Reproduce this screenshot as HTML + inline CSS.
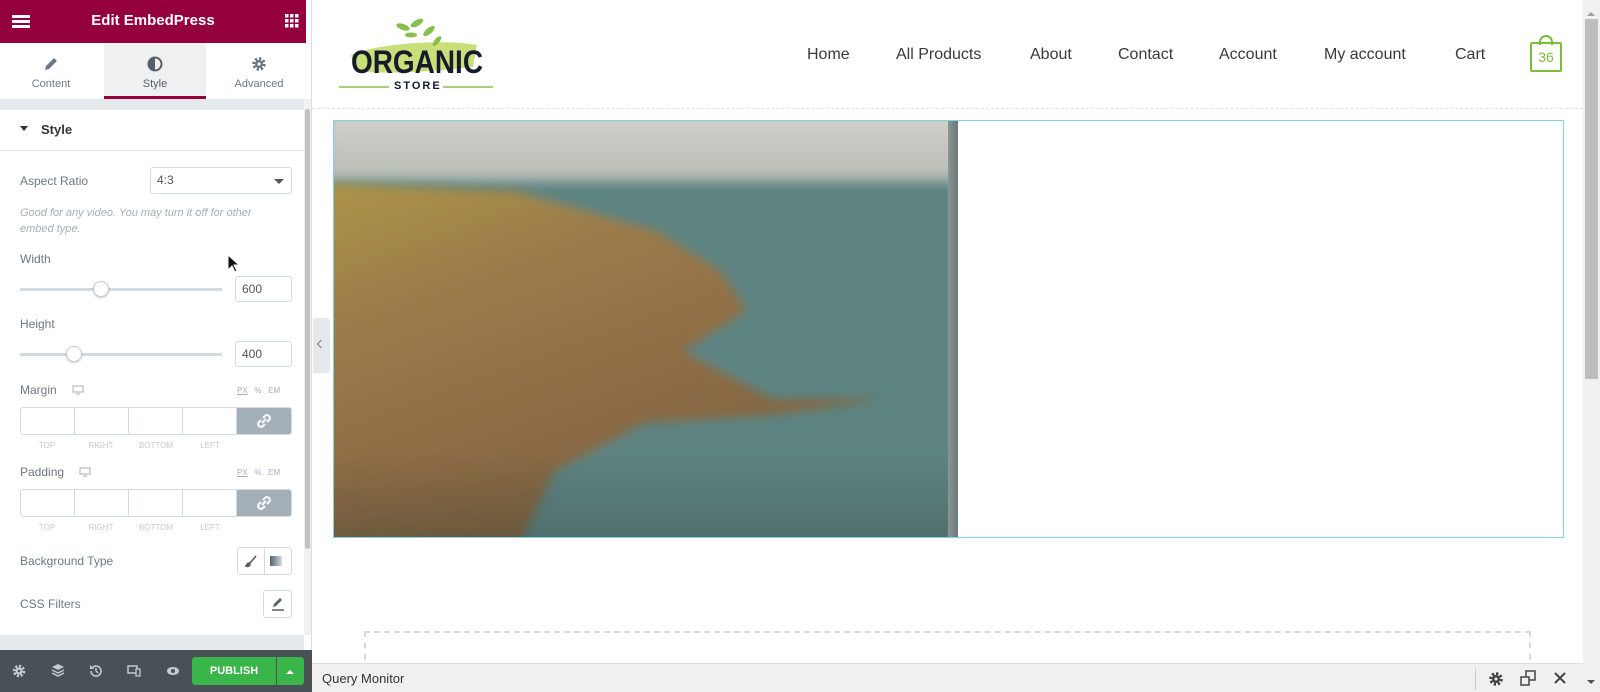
<!DOCTYPE html>
<html><head><meta charset="utf-8"><style>
*{box-sizing:border-box;margin:0;padding:0}
body{width:1600px;height:692px;overflow:hidden;font-family:"Liberation Sans",sans-serif;background:#fff;position:relative}
.abs{position:absolute}
#side{left:0;top:0;width:312px;height:692px;background:#fff;border-right:1px solid #ddd}
#hdr{left:0;top:0;width:306px;height:43px;background:#93003c;color:#fff;font-size:15px;font-weight:bold;text-align:center;line-height:42px}
.tab{top:43px;height:56px;width:102px;text-align:center;font-size:11px;color:#6d7882}
.lbl{font-size:12px;color:#6d7882;left:20px}
.inp{border:1px solid #d5dadf;border-radius:3px;background:#fff;font-size:12px;color:#555;padding-left:6px}
.track{height:3px;background:#d5dadf;left:20px;width:202px}
.knob{width:16px;height:16px;border-radius:50%;background:#fff;border:1px solid #c5cbd1;box-shadow:0 1px 2px rgba(0,0,0,.2)}
.dims{left:20px;width:272px;height:28px;border:1px solid #d5dadf;border-radius:3px;display:flex;overflow:hidden}
.dims div{flex:1;border-right:1px solid #d5dadf}
.dims .lk{background:#a4afb7;border:none;flex:1.02}
.sub{font-size:8px;color:#c2cbd2;width:54px;text-align:center}
.units{font-size:8px;color:#a4afb7;left:237px}
.nav{top:46px;font-size:16px;color:#3a3a3a;font-family:"Liberation Sans",sans-serif}
</style></head><body>

<div id="side" class="abs">
 <div id="hdr" class="abs">Edit EmbedPress
  <div class="abs" style="left:12px;top:15px;width:18px;height:13px;border-top:3px solid #fff;border-bottom:3px solid #fff"><div style="margin-top:2px;height:3px;background:#fff"></div></div>
  <svg class="abs" style="left:285px;top:14px" width="14" height="14"><g fill="#fff"><rect x="0" y="0" width="3.5" height="3.5"/><rect x="5" y="0" width="3.5" height="3.5"/><rect x="10" y="0" width="3.5" height="3.5"/><rect x="0" y="5" width="3.5" height="3.5"/><rect x="5" y="5" width="3.5" height="3.5"/><rect x="10" y="5" width="3.5" height="3.5"/><rect x="0" y="10" width="3.5" height="3.5"/><rect x="5" y="10" width="3.5" height="3.5"/><rect x="10" y="10" width="3.5" height="3.5"/></g></svg>
 </div>
 <div class="abs tab" style="left:0"><svg style="margin-top:13px" width="16" height="16"><path d="M2 14l1-4 8-8 3 3-8 8z" fill="#6d7882"/></svg><div style="margin-top:3px">Content</div></div>
 <div class="abs tab" style="left:104px;background:#eef0f2;border-bottom:3px solid #93003c;color:#556068"><svg style="margin-top:13px" width="16" height="16"><circle cx="8" cy="8" r="6.5" fill="none" stroke="#556068" stroke-width="2"/><path d="M8 1.5a6.5 6.5 0 0 0 0 13z" fill="#556068"/></svg><div style="margin-top:3px">Style</div></div>
 <div class="abs tab" style="left:208px"><svg style="margin-top:13px" width="16" height="16"><circle cx="8" cy="8" r="5" fill="none" stroke="#6d7882" stroke-width="3.5" stroke-dasharray="2.2 1.7"/><circle cx="8" cy="8" r="4" fill="#6d7882"/><circle cx="8" cy="8" r="1.6" fill="#fff"/></svg><div style="margin-top:3px">Advanced</div></div>
 <div class="abs" style="left:0;top:99px;width:304px;height:11px;background:#e6e9ec"></div>
 <div class="abs" style="left:0;top:110px;width:304px;height:41px;border-bottom:1px solid #e6e9ec"></div>
 <div class="abs" style="left:20px;top:126px;border:4px solid transparent;border-top:5px solid #333"></div>
 <div class="abs" style="left:41px;top:122px;font-size:13px;font-weight:bold;color:#333">Style</div>
 <div class="abs lbl" style="top:174px">Aspect Ratio</div>
 <div class="abs inp" style="left:150px;top:167px;width:142px;height:27px;line-height:25px">4:3<div class="abs" style="right:7px;top:11px;border:5px solid transparent;border-top:5px solid #555"></div></div>
 <div class="abs" style="left:20px;top:205px;width:260px;font-size:11px;font-style:italic;color:#a4afb7;line-height:16px">Good for any video. You may turn it off for other embed type.</div>
 <div class="abs lbl" style="top:252px">Width</div>
 <div class="abs track" style="top:288px"></div>
 <div class="abs knob" style="left:93px;top:281px"></div>
 <div class="abs inp" style="left:235px;top:276px;width:57px;height:26px;line-height:24px">600</div>
 <svg class="abs" style="left:227px;top:254px" width="14" height="20"><path d="M1 1v15l4-4 3 6 2-1-3-6h5z" fill="#111" stroke="#fff" stroke-width="1"/></svg>
 <div class="abs lbl" style="top:317px">Height</div>
 <div class="abs track" style="top:353px"></div>
 <div class="abs knob" style="left:66px;top:346px"></div>
 <div class="abs inp" style="left:235px;top:341px;width:57px;height:26px;line-height:24px">400</div>
 <div class="abs lbl" style="top:383px">Margin</div>
 <svg class="abs" style="left:72px;top:385px" width="12" height="10"><rect x="1" y="1" width="10" height="6" fill="none" stroke="#a4afb7"/><path d="M4 9h4" stroke="#a4afb7"/></svg>
 <div class="abs units" style="top:386px"><u>PX</u>&nbsp;&nbsp; %&nbsp;&nbsp; EM</div>
 <div class="abs dims" style="top:407px"><div></div><div></div><div></div><div></div><div class="lk"></div></div>
 <svg class="abs" style="left:257px;top:414px" width="14" height="14"><g fill="none" stroke="#fff" stroke-width="2"><path d="M6 4l2-2a2.5 2.5 0 0 1 4 4l-2 2"/><path d="M8 10l-2 2a2.5 2.5 0 0 1-4-4l2-2"/><path d="M5 9l4-4"/></g></svg>
 <div class="abs sub" style="left:20px;top:441px">TOP</div><div class="abs sub" style="left:74px;top:441px">RIGHT</div><div class="abs sub" style="left:129px;top:441px">BOTTOM</div><div class="abs sub" style="left:183px;top:441px">LEFT</div>
 <div class="abs lbl" style="top:465px">Padding</div>
 <svg class="abs" style="left:79px;top:467px" width="12" height="10"><rect x="1" y="1" width="10" height="6" fill="none" stroke="#a4afb7"/><path d="M4 9h4" stroke="#a4afb7"/></svg>
 <div class="abs units" style="top:468px"><u>PX</u>&nbsp;&nbsp; %&nbsp;&nbsp; EM</div>
 <div class="abs dims" style="top:489px"><div></div><div></div><div></div><div></div><div class="lk"></div></div>
 <svg class="abs" style="left:257px;top:496px" width="14" height="14"><g fill="none" stroke="#fff" stroke-width="2"><path d="M6 4l2-2a2.5 2.5 0 0 1 4 4l-2 2"/><path d="M8 10l-2 2a2.5 2.5 0 0 1-4-4l2-2"/><path d="M5 9l4-4"/></g></svg>
 <div class="abs sub" style="left:20px;top:523px">TOP</div><div class="abs sub" style="left:74px;top:523px">RIGHT</div><div class="abs sub" style="left:129px;top:523px">BOTTOM</div><div class="abs sub" style="left:183px;top:523px">LEFT</div>
 <div class="abs lbl" style="top:554px">Background Type</div>
 <div class="abs" style="left:237px;top:547px;width:55px;height:28px;border:1px solid #d5dadf;border-radius:3px"><div class="abs" style="left:26px;top:0;height:26px;border-left:1px solid #d5dadf"></div>
  <svg class="abs" style="left:6px;top:6px" width="14" height="14"><path d="M12 2L6 9M2 12c1-1 1-3 3-3l1 1c0 2-2 3-4 2z" stroke="#556068" stroke-width="1.6" fill="#556068"/></svg>
  <div class="abs" style="left:32px;top:8px;width:12px;height:10px;background:linear-gradient(90deg,#556068,#d5dadf)"></div></div>
 <div class="abs lbl" style="top:597px">CSS Filters</div>
 <div class="abs" style="left:263px;top:590px;width:29px;height:28px;border:1px solid #d5dadf;border-radius:3px"><svg class="abs" style="left:6px;top:5px" width="16" height="16"><path d="M3 11l1-3 6-6 2 2-6 6z" fill="#556068"/><path d="M2 14h12" stroke="#556068" stroke-width="1.5"/></svg></div>
 <div class="abs" style="left:0;top:635px;width:304px;height:15px;background:#e6e9ec"></div>
 <div class="abs" style="left:304px;top:99px;width:7px;height:536px;background:#f1f1f1"><div style="margin:10px 0 0 1px;width:5px;height:440px;background:#c1c1c1;border-radius:3px"></div></div>
 <div class="abs" style="left:0;top:650px;width:312px;height:42px;background:#495157">
  <svg class="abs" style="left:12px;top:14px" width="14" height="14"><circle cx="7" cy="7" r="4.5" fill="none" stroke="#c2cbd2" stroke-width="3.5" stroke-dasharray="2 1.5"/><circle cx="7" cy="7" r="3.5" fill="#c2cbd2"/><circle cx="7" cy="7" r="1.3" fill="#495157"/></svg>
  <svg class="abs" style="left:51px;top:13px" width="14" height="14"><path d="M7 1l6 3-6 3-6-3z" fill="#c2cbd2"/><path d="M1 7l6 3 6-3M1 10l6 3 6-3" stroke="#c2cbd2" fill="none" stroke-width="1.5"/></svg>
  <svg class="abs" style="left:89px;top:14px" width="14" height="14"><path d="M2 7a5 5 0 1 0 1.5-3.5" fill="none" stroke="#c2cbd2" stroke-width="1.6"/><path d="M1 1v4h4" fill="#c2cbd2"/><path d="M7 4v3l2 2" stroke="#c2cbd2" fill="none" stroke-width="1.5"/></svg>
  <svg class="abs" style="left:127px;top:15px" width="14" height="12"><rect x="1" y="1" width="9" height="7" fill="none" stroke="#c2cbd2" stroke-width="1.5"/><rect x="9" y="4" width="4" height="7" fill="#495157" stroke="#c2cbd2" stroke-width="1.3"/></svg>
  <svg class="abs" style="left:166px;top:16px" width="14" height="10"><ellipse cx="7" cy="5" rx="6" ry="4" fill="#c2cbd2"/><circle cx="7" cy="5" r="2" fill="#495157"/></svg>
  <div class="abs" style="left:192px;top:7px;width:84px;height:28px;background:#39b54a;border-radius:3px 0 0 3px;color:#fff;font-size:11px;font-weight:bold;text-align:center;line-height:28px">PUBLISH</div>
  <div class="abs" style="left:277px;top:7px;width:27px;height:28px;background:#39b54a;border-radius:0 3px 3px 0"><div class="abs" style="left:9px;top:9px;border:4px solid transparent;border-bottom:4px solid #fff"></div></div>
 </div>
</div>

<!-- canvas -->
<div class="abs" style="left:312px;top:0;width:1271px;height:663px;background:#fff">
 <svg class="abs" style="left:25px;top:15px" width="160" height="78">
  <path d="M14 40 C40 28 110 24 140 30 L136 52 C100 56 50 60 18 56 Z" fill="#c9e07a"/>
  <g fill="#86c04a"><ellipse cx="66" cy="12" rx="7" ry="3" transform="rotate(20 66 12)"/><ellipse cx="80" cy="8" rx="7" ry="3" transform="rotate(-30 80 8)"/><ellipse cx="92" cy="16" rx="7" ry="3" transform="rotate(-40 92 16)"/><ellipse cx="74" cy="20" rx="6" ry="2.5"/><ellipse cx="100" cy="26" rx="6" ry="2.5" transform="rotate(-50 100 26)"/></g>
  <text x="14" y="58" font-family="Liberation Sans" font-weight="bold" font-size="32" fill="#141b2a" textLength="132" lengthAdjust="spacingAndGlyphs">ORGANIC</text>
  <text x="57" y="74" font-family="Liberation Sans" font-weight="bold" font-size="11" fill="#141b2a" letter-spacing="2">STORE</text>
  <path d="M2 72h50M106 72h50" stroke="#86c04a" stroke-width="1.5"/>
 </svg>
 <div class="abs nav" style="left:495px">Home</div>
 <div class="abs nav" style="left:584px">All Products</div>
 <div class="abs nav" style="left:718px">About</div>
 <div class="abs nav" style="left:806px">Contact</div>
 <div class="abs nav" style="left:907px">Account</div>
 <div class="abs nav" style="left:1012px">My account</div>
 <div class="abs nav" style="left:1143px">Cart</div>
 <div class="abs" style="left:1218px;top:42px;width:32px;height:30px;border:2px solid #7dbb3a;border-radius:2px;color:#7dbb3a;font-size:14px;text-align:center;line-height:26px">36</div>
 <div class="abs" style="left:1227px;top:35px;width:14px;height:10px;border:2px solid #7dbb3a;border-bottom:none;border-radius:7px 7px 0 0"></div>
 <div class="abs" style="left:0;top:108px;width:1271px;border-top:1px dashed #dde3e6"></div>
 <div class="abs" style="left:21px;top:120px;width:1231px;height:418px;border:1px solid #7fd3e6"></div>
 <div class="abs" style="left:22px;top:121px;width:624px;height:416px;overflow:hidden;background:#5e8482">
  <div class="abs" style="left:-10px;top:-10px;width:650px;height:70px;background:linear-gradient(#d2d2cc,#b7bdb6);filter:blur(6px)"></div>
  <div class="abs" style="left:0;top:0;width:624px;height:416px;filter:blur(5px)">
   <div class="abs" style="left:-10px;top:30px;width:640px;height:400px;background:linear-gradient(160deg,#b09a48 0%,#9b7a4a 30%,#8e6c45 55%,#6a5a3a 100%);clip-path:polygon(0 8%,30% 10%,52% 20%,62% 30%,66% 40%,56% 50%,70% 62%,88% 62%,70% 66%,50% 68%,36% 80%,30% 100%,0 100%)"></div>
  </div>
  <div class="abs" style="left:0;top:330px;width:624px;height:86px;background:linear-gradient(rgba(0,0,0,0),rgba(40,50,45,.25))"></div>
  <div class="abs" style="right:0;top:0;width:10px;height:416px;background:linear-gradient(90deg,#8a9596,#6c7677)"></div>
 </div>
 <div class="abs" style="left:1px;top:318px;width:17px;height:55px;background:#e6e9ec;border-radius:0 3px 3px 0"><div class="abs" style="left:5px;top:23px;width:6px;height:6px;border-left:1.5px solid #6d7882;border-bottom:1.5px solid #6d7882;transform:rotate(45deg)"></div></div>
 <div class="abs" style="left:52px;top:631px;width:1167px;height:40px;border:2px dashed #d5dadf;border-bottom:none"></div>
</div>
<div class="abs" style="left:1583px;top:0;width:17px;height:692px;background:#f0f0f0"><div class="abs" style="left:2px;top:19px;width:13px;height:360px;background:#bdbdbd"></div><div class="abs" style="left:4px;top:8px;border:4px solid transparent;border-bottom:4px solid #a0a0a0"></div><div class="abs" style="left:4px;top:680px;border:4px solid transparent;border-top:4px solid #505050"></div></div>
<div class="abs" style="left:312px;top:663px;width:1271px;height:29px;background:#f0f0f1;border-top:1px solid #ddd">
 <div class="abs" style="left:10px;top:7px;font-size:13px;color:#333">Query Monitor</div>
 <div class="abs" style="left:1163px;top:4px;height:22px;border-left:1px solid #ccc"></div>
 <svg class="abs" style="left:1176px;top:7px" width="16" height="16"><circle cx="8" cy="8" r="5" fill="none" stroke="#444" stroke-width="3.5" stroke-dasharray="2.2 1.7"/><circle cx="8" cy="8" r="4" fill="#444"/><circle cx="8" cy="8" r="1.5" fill="#f0f0f1"/></svg>
 <svg class="abs" style="left:1208px;top:6px" width="16" height="16"><rect x="6" y="1" width="9" height="9" fill="none" stroke="#444" stroke-width="1.5"/><rect x="1" y="7" width="8" height="8" fill="#f0f0f1" stroke="#444" stroke-width="1.5"/></svg>
 <svg class="abs" style="left:1242px;top:8px" width="12" height="12"><path d="M1 1l10 10M11 1L1 11" stroke="#444" stroke-width="2"/></svg>
</div>
</body></html>
